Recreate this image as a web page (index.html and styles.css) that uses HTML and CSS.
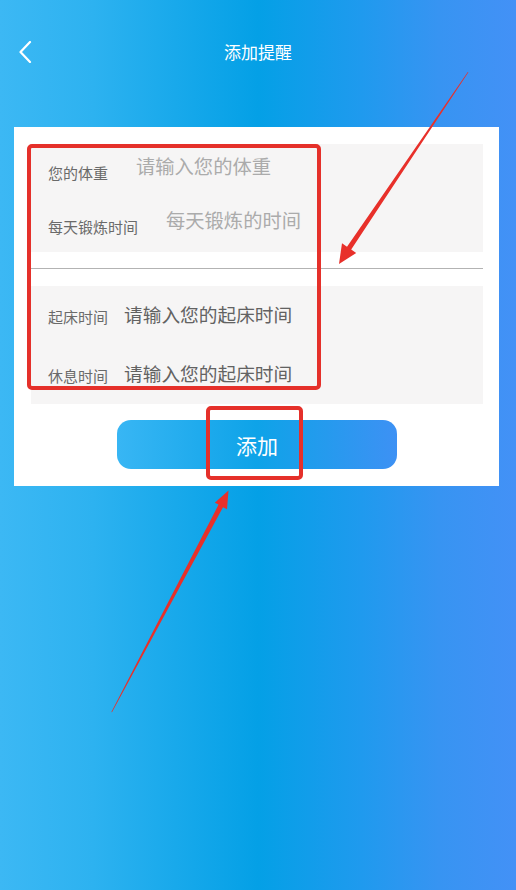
FILE: index.html
```html
<!DOCTYPE html>
<html lang="zh-CN">
<head>
<meta charset="utf-8">
<title>添加提醒</title>
<link rel="stylesheet" href="styles.css">
</head>
<body>
<div class="page">
  <header class="nav">
    <span class="back">
      <svg width="14" height="22" viewBox="0 0 14 22"><path d="M12 1 L2.5 11 L12 21" fill="none" stroke="#fff" stroke-width="2.2" stroke-linecap="round" stroke-linejoin="round"/></svg>
    </span>
    <h1 class="title">添加提醒</h1>
  </header>

  <main class="card">
    <section class="block block-top">
      <div class="row">
        <span class="label">您的体重</span>
        <span class="placeholder">请输入您的体重</span>
      </div>
      <div class="row">
        <span class="label">每天锻炼时间</span>
        <span class="placeholder">每天锻炼的时间</span>
      </div>
    </section>
    <div class="divider"></div>
    <section class="block block-bottom">
      <div class="row row-tall">
        <span class="label">起床时间</span>
        <span class="value">请输入您的起床时间</span>
      </div>
      <div class="row row-tall">
        <span class="label">休息时间</span>
        <span class="value">请输入您的起床时间</span>
      </div>
    </section>
    <div class="actions">
      <button class="btn" type="button">添加</button>
    </div>
  </main>

  <svg class="annot" width="516" height="890" viewBox="0 0 516 890">
    <rect x="29" y="146" width="290" height="242" rx="3" fill="none" stroke="#e5302a" stroke-width="4"/>
    <rect x="208" y="408" width="93" height="70" rx="3" fill="none" stroke="#e5302a" stroke-width="4"/>
    <polygon fill="#e8302a" points="468.4,72.3 351.2,249.5 356.2,253 339,264 342,243.2 347,246.7 467.8,71.9"/>
    <polygon fill="#e8302a" points="111.4,712 218.6,504.6 214.8,502.8 228.5,490.5 227,509.3 223,507.2 112,712.3"/>
  </svg>
</div>
</body>
</html>
```

FILE: styles.css
```css
* { box-sizing: border-box; }
html, body { margin: 0; padding: 0; }
body {
  font-family: "Noto Sans CJK SC", "Noto Sans", sans-serif;
}
.page {
  position: relative;
  width: 516px;
  height: 890px;
  overflow: hidden;
  background: linear-gradient(90deg, #3cb8f4 0%, #2db2f0 18%, #04a0e6 50%, #1f9aee 70%, #3794f2 85%, #4391f6 100%);
}
.nav {
  position: relative;
  height: 127px;
  display: flex;
  justify-content: center;
  padding-top: 40px;
}
.back {
  position: absolute;
  left: 18px;
  top: 41px;
  display: block;
  line-height: 0;
}
.title {
  margin: 0;
  font-size: 17px;
  font-weight: 400;
  line-height: 24px;
  color: #fff;
}
.card {
  margin: 0 17px 0 14px;
  background: #fff;
  padding: 17px 16px 17px 17px;
}
.block {
  background: #f6f5f5;
}
.block-top { height: 108px; }
.block-bottom { height: 118px; }
.row {
  height: 54px;
  display: flex;
  align-items: center;
  padding-left: 17px;
}
.row-tall { height: 59px; }
.label {
  font-size: 15px;
  color: #6a6a6a;
  line-height: 20px;
  padding-top: 3px;
}
.placeholder {
  font-size: 19.3px;
  color: #ababab;
  line-height: 26px;
  margin-left: 28px;
  margin-bottom: 10px;
}
.value {
  font-size: 18.7px;
  color: #626262;
  line-height: 26px;
  margin-left: 16px;
  margin-bottom: 4px;
}
.divider {
  height: 1px;
  background: #b3b3b3;
  margin: 16px 0 17px;
}
.actions {
  display: flex;
  justify-content: center;
  padding-top: 16px;
}
.btn {
  width: 280px;
  height: 49px;
  border: 0;
  border-radius: 14px;
  background: linear-gradient(90deg, #38b6f4 0%, #0ea3e8 50%, #3d91f4 100%);
  color: #fff;
  font-family: "Noto Sans CJK SC", "Noto Sans", sans-serif;
  font-size: 21px;
  line-height: 28px;
  padding: 0;
}
.annot {
  position: absolute;
  left: 0;
  top: 0;
  pointer-events: none;
}
```
